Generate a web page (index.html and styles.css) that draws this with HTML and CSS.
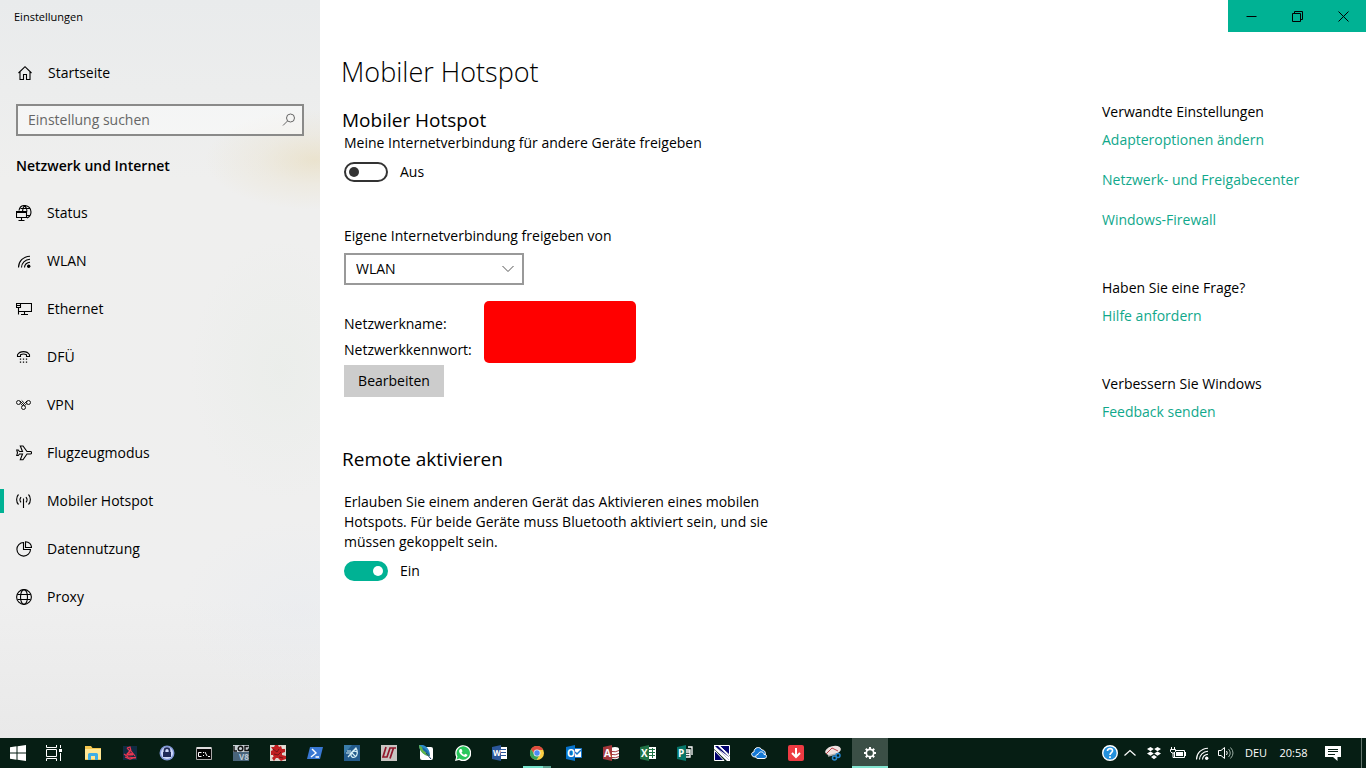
FILE: index.html
```html
<!DOCTYPE html>
<html lang="de">
<head>
<meta charset="utf-8">
<meta name="viewport" content="width=device-width, initial-scale=1">
<title>Einstellungen</title>
<link rel="stylesheet" href="styles.css">
</head>
<body>
<div class="window">
  <aside class="sidebar">
    <div class="window-title">Einstellungen</div>
    <a class="home" href="#">
      <svg class="icon" viewBox="0 0 16 16"><path d="M1.500 8 8 1.700 14.500 8M3 6.800V14.500h3.500V9.500h3v5H13V6.800"/></svg>
      Startseite
    </a>
    <div class="search">
      <input class="search-input" type="text" placeholder="Einstellung suchen" aria-label="Einstellung suchen">
      <svg class="search-icon" viewBox="0 0 14 14"><circle cx="8.500" cy="5" r="4"/><path d="M5.500 8 1 12.500"/></svg>
    </div>
    <h2 class="sidebar-heading">Netzwerk und Internet</h2>
    <nav class="nav">
      <a class="nav-item" href="#"><svg class="icon" viewBox="0 0 16 16"><path d="M3 5.500C3.500 2.500 5.500.5 8.500.5c4 0 6.500 3 6.500 6.500 0 3-1.500 5-4 6M4.500 3.500h9M6.500 6.500c0-2.500.7-4.500 2-6M8.500.5c1.700 1.700 2.500 4 2.500 6M.5 7.500v5h10v-5zM.5 7.500v-1h10v1M11 10.500h3M5.500 12.500v3M2.500 15.500h6"/></svg>Status</a>
      <a class="nav-item" href="#"><svg class="icon" viewBox="0 0 16 16"><path d="M2.500 14.500C2.500 8.500 7 3.500 14 3.200M5.500 14.500c0-4.500 3.500-8 8.500-8.300M8.500 14.500c0-3 2.500-5.200 5.500-5.300"/><circle class="solid" cx="12.700" cy="13.300" r="1.700"/></svg>WLAN</a>
      <a class="nav-item" href="#"><svg class="icon" viewBox="0 0 16 16"><path d="M4.500 2.500h11v8h-13v-4M.5 2.500h4v4h-4zM.5 4.500h4M8.500 10.500v3M2.500 10v3.500M5 13.500h7"/></svg>Ethernet</a>
      <a class="nav-item" href="#"><svg class="icon" viewBox="0 0 16 16"><path d="M1.500 7.500V5.800C4 1.600 11 1.600 13.500 5.800v1.700h-3V5.700C9 5 6 5 4.500 5.700v1.800z"/><path class="dots" d="M4.500 9.500v6M7.500 9.500v6M10.500 9.500v6"/></svg>DFÜ</a>
      <a class="nav-item" href="#"><svg class="icon thin" viewBox="0 0 16 16"><circle cx="2.500" cy="5.500" r="2"/><circle cx="12.500" cy="5.500" r="2"/><circle cx="7.500" cy="10.500" r="2"/><path d="M4 4 8.500 8.500M4.500 6.500 6.500 8.700M11 4 6.500 8.500M5.700 3.500 8 5.800M10.500 6.500 9 8.500"/></svg>VPN</a>
      <a class="nav-item" href="#"><svg class="icon" viewBox="0 0 16 16"><path d="M6.500 6.500 4.300 1H7l4 5.500h3.500c1.400 0 1.400 2.500 0 2.500H11l-4 5.800H4.300l2.200-5.800h-3L2.300 10.500H.7L1.500 7.800.7 5h1.600l1.200 1.500z"/></svg>Flugzeugmodus</a>
      <a class="nav-item active" href="#" aria-current="page"><svg class="icon" viewBox="0 0 16 16"><path d="M7.500 5.500v9.500M5 4c-1.200 1.500-1.200 3.800 0 5.300M10 4c1.200 1.500 1.200 3.800 0 5.300M2.500 1.500C0 4 0 9 2.500 11.500M12.500 1.500c2.500 2.500 2.500 7.500 0 10"/></svg>Mobiler Hotspot</a>
      <a class="nav-item" href="#"><svg class="icon" viewBox="0 0 16 16"><path d="M7.500 1.500A6.800 6.800 0 1 0 14.500 8.500H7.500zM9.500.7v5.800h6C15.500 3.200 13 .7 9.500.7z"/></svg>Datennutzung</a>
      <a class="nav-item" href="#"><svg class="icon" viewBox="0 0 16 16"><circle cx="8" cy="8" r="7.400"/><ellipse cx="8" cy="8" rx="3.500" ry="7.400"/><path d="M1.500 5.500h13M1.500 10.500h13"/></svg>Proxy</a>
    </nav>
  </aside>
  <main class="main">
    <div class="caption">
      <button class="caption-button" aria-label="Minimieren"><svg viewBox="0 0 11 11"><path d="M.5 5.500h10"/></svg></button>
      <button class="caption-button" aria-label="Verkleinern"><svg viewBox="0 0 11 11"><path d="M.5 2.500h8v8h-8zM2.500 2.500v-2h8v8h-2"/></svg></button>
      <button class="caption-button" aria-label="Schließen"><svg viewBox="0 0 11 11"><path d="m.5.5 10 10m0-10-10 10"/></svg></button>
    </div>
    <div class="page">
      <div class="content">
        <h1 class="page-title">Mobiler Hotspot</h1>
        <section class="hotspot">
          <h2 class="section-title">Mobiler Hotspot</h2>
          <p class="text" id="share">Meine Internetverbindung für andere Geräte freigeben</p>
          <label class="toggle"><input class="switch" type="checkbox" role="switch" aria-describedby="share">Aus</label>
        </section>
        <section class="source">
          <label class="text" for="connection">Eigene Internetverbindung freigeben von</label>
          <div class="select">
            <select class="select-box" id="connection"><option>WLAN</option></select>
            <svg class="select-arrow" viewBox="0 0 14 8"><path d="m1.500 1 5.500 5.500L12.500 1"/></svg>
          </div>
        </section>
        <section class="network">
          <div class="network-labels"><span>Netzwerkname:</span><span>Netzwerkkennwort:</span></div>
          <div class="redacted"></div>
        </section>
        <button class="edit">Bearbeiten</button>
        <section class="remote">
          <h2 class="section-title">Remote aktivieren</h2>
          <p class="text remote-text" id="remote">Erlauben Sie einem anderen Gerät das Aktivieren eines mobilen Hotspots. Für beide Geräte muss Bluetooth aktiviert sein, und sie müssen gekoppelt sein.</p>
          <label class="toggle"><input class="switch" type="checkbox" role="switch" checked aria-describedby="remote">Ein</label>
        </section>
      </div>
      <aside class="related">
        <section class="related-group"><h3 class="related-title">Verwandte Einstellungen</h3>
          <div class="links"><a href="#">Adapteroptionen ändern</a><a href="#">Netzwerk- und Freigabecenter</a><a href="#">Windows-Firewall</a></div></section>
        <section class="related-group"><h3 class="related-title">Haben Sie eine Frage?</h3>
          <div class="links"><a href="#">Hilfe anfordern</a></div></section>
        <section class="related-group"><h3 class="related-title">Verbessern Sie Windows</h3>
          <div class="links"><a href="#">Feedback senden</a></div></section>
      </aside>
    </div>
  </main>
</div>
<footer class="taskbar">
  <div class="system">
    <button class="task" aria-label="Start"><svg viewBox="0 0 16 16"><path fill="#fff" d="M0 2.300 6.500 1.300v6.200H0zM7.500 1.200 16 0v7.500H7.500zM0 8.500h6.500v6.200L0 13.700zM7.500 8.500H16V16l-8.500-1.200z"/></svg></button>
    <button class="task" aria-label="Aktive Anwendungen"><svg viewBox="0 0 16 16"><path fill="none" stroke="#fff" d="M.5 0v2.500h10V0M.5 4.500h10v7H.5zM.5 16v-2.500h10V16M14.500 0v3M14.500 8v8"/><path fill="#fff" d="M13 4h3v3h-3z"/></svg></button>
  </div>
  <div class="apps">
    <button class="task" aria-label="Explorer"><svg viewBox="0 0 16 16"><path fill="#f4c64f" d="M0 1h6l1.500 2H16v12H0z"/><path fill="#ffe794" d="M0 4h16v10H0z"/><path fill="#3eaee5" d="M3 15V9.500Q3 8 4.500 8h7Q13 8 13 9.500V15h-3v-4H6v4z"/></svg></button>
    <button class="task" aria-label="Funkprogramm"><svg viewBox="0 0 16 16"><path fill="#112b42" d="M1 1h14v14H1z"/><path fill="none" stroke="#ef3650" stroke-width="1.200" d="m5 3 3-1 1 4 4 5M5 3l3 3-3 3 6 1M2 9l4 3 8 1M3 12l5 2 6-2M6 7l4 2-5 1"/></svg></button>
    <button class="task" aria-label="Passwörter"><svg viewBox="0 0 16 16"><circle cx="8" cy="8" r="7.500" fill="#8298d6"/><circle cx="8" cy="8" r="6" fill="#d0dafa"/><path fill="none" stroke="#202a58" stroke-width="1.700" d="M5.500 8V5.500C5.500 2.300 10.500 2.300 10.500 5.500V8"/><path fill="#202a58" d="M4 7h8v5H4z"/></svg></button>
    <button class="task" aria-label="Eingabeaufforderung"><svg viewBox="0 0 16 16"><path fill="#050505" stroke="#aaa" d="M.5 2.500h15v12H.5z"/><path fill="#ddd" d="M1 2h14v2H1z"/><path fill="none" stroke="#fff" d="M5.500 7.500h-3v4h3M7.500 7v1M7.500 10v1M9 7l2 4M12 11.500h2"/></svg></button>
    <button class="task" aria-label="LOGO! V8"><svg viewBox="0 0 16 16"><path fill="#c7cfd5" d="M0 0h16v7H0z"/><path fill="#49647a" d="M0 7h16v9H0z"/><path fill="none" stroke="#111" stroke-width="1.400" d="M1 1v5h3M15.500 1.500H12v4h3.500v-2"/><ellipse cx="7.500" cy="3.500" rx="2.300" ry="2.200" fill="none" stroke="#111" stroke-width="1.400"/><text class="glyph" x="6" y="15" font-size="8" fill="#bdcbd7">V8</text></svg></button>
    <button class="task" aria-label="Zahnräder"><svg viewBox="0 0 16 16"><path fill="#ddd6cf" d="M0 0h16v16H0z"/><path fill="#c01d20" d="M1 2h3l1-2h3l1 2 2-1 1 3h3v3l-3 1v2l4 1v3l-3 1-2 1-3-3H6l-2 3-2-3 2-2-3-1V6l2-1z"/><path fill="none" stroke="#721316" d="m3 4 4 3 2-3M4 9l4 1 3-3M9 12l4 1"/><path fill="#eadfd8" d="M12 1h3v2h-3zM1 10h2v2H1z"/></svg></button>
    <button class="task" aria-label="PowerShell"><svg viewBox="0 0 16 16"><path fill="#3978d3" d="M3 2h13l-3 12H0z"/><path fill="none" stroke="#fff" stroke-width="1.400" d="m5 4 4 4-5 4M8.500 12H12"/></svg></button>
    <button class="task" aria-label="Fischer"><svg viewBox="0 0 16 16"><path fill="#235b8b" d="M0 0h16v16H0z"/><path fill="#3a7daa" d="M0 0h8L0 9z"/><path fill="none" stroke="#d5eff5" stroke-width="1.200" d="M3 6h4M2 8h5l5-5M4 12l8-9c2 3 2 7-1 9-2 1-4 0-4-2 0-3 3-5 6-3M8 8l3 3"/></svg></button>
    <button class="task" aria-label="LTspice"><svg viewBox="0 0 16 16"><path fill="#c9c4c2" d="M0 0h16v16H0z"/><path fill="none" stroke="#92172b" stroke-width="1.700" d="M5 2 2 12h4L9 3h6M12.500 3 9 13.500"/></svg></button>
    <button class="task" aria-label="Stift"><svg viewBox="0 0 16 16"><rect x="2" y="2" width="13" height="13" rx="2" fill="#fff"/><path fill="#2d8ac8" d="M1 0h4c5 2 7 6 7 11C6 11 1 6 1 0z"/><path fill="#62b548" d="M1 0c3 2 8 6 11 11C6 11 1 6 1 0z"/><path fill="#1767a8" d="M4 2c4 2 7 5 8 9L5 5z"/><path stroke="#163c67" d="m8 8 5 6"/></svg></button>
    <button class="task" aria-label="WhatsApp"><svg viewBox="0 0 16 16"><path fill="#fff" d="M0 16 1.200 12A8 8 0 1 1 4 15z"/><path fill="#29c65c" d="m1.500 14.500 1-3A6.700 6.700 0 1 1 4.500 13.600z"/><path fill="#fff" d="M5 4h1.500l1 2.200-1 1.200c.8 1.300 1.500 1.900 2.700 2.300l1.200-1 2 1c0 1.500-1.300 2.500-3 2.100C6.500 11 4 8 4 5.800z"/></svg></button>
    <button class="task" aria-label="Word"><svg viewBox="0 0 16 16"><path fill="#fff" d="M8 2h7v12H8z"/><path stroke="#2b579a" d="M9 4.500h5M9 7.500h5M9 10.500h5"/><path fill="#2b579a" d="m0 2 9-2v16l-9-2z"/><text class="glyph" x="1" y="11" font-size="8" fill="#fff">W</text></svg></button>
    <button class="task open" aria-label="Chrome"><svg viewBox="0 0 16 16"><circle cx="8" cy="8" r="7" fill="#fbcf42"/><path fill="#df4b3f" d="M2 4.300A7 7 0 0 1 14.200 5H8L5 9z"/><path fill="#35a35b" d="M2 4.300A7 7 0 0 0 7.500 15l3-5-5-.3z"/><circle cx="8" cy="8" r="3.500" fill="#eee"/><circle cx="8" cy="8" r="2.700" fill="#4c8bf5"/></svg></button>
    <button class="task" aria-label="Outlook"><svg viewBox="0 0 16 16"><path fill="#fff" stroke="#1677cd" d="M8 3.500h7.500v9H8z"/><path fill="none" stroke="#1677cd" stroke-width="1.500" d="m9 7 2 2 4-4"/><path fill="#0873ca" d="m0 2 9-2v16l-9-2z"/><text class="glyph" x="1" y="12" font-size="10" fill="#fff">O</text></svg></button>
    <button class="task" aria-label="Access"><svg viewBox="0 0 16 16"><ellipse cx="12" cy="4" rx="4" ry="2" fill="#fff"/><path fill="#fff" d="M8 4h8v8c0 3-8 3-8 0z"/><path fill="none" stroke="#a4373a" d="M9 6.500q3 1 7-1M9 9.500q3 1 7-1M9 12.500q3 1 7-1"/><path fill="#a4373a" d="m0 2 9-2v16l-9-2z"/><text class="glyph" x="1" y="12" font-size="10" fill="#fff">A</text></svg></button>
    <button class="task" aria-label="Excel"><svg viewBox="0 0 16 16"><path fill="#fff" d="M8 2h8v12H8z"/><path fill="none" stroke="#217346" d="M9 4.500h6M9 7.500h6M9 10.500h6M12.500 3v10"/><path fill="#217346" d="m0 2 9-2v16l-9-2z"/><text class="glyph" x="1" y="12" font-size="10" fill="#fff">X</text></svg></button>
    <button class="task" aria-label="Publisher"><svg viewBox="0 0 16 16"><path fill="none" stroke="#fff" stroke-width="1.300" d="M9 5h4v7H9M11 2h4v8M9 7h4M9 9.500h4"/><path fill="#077568" d="m0 2 9-2v16l-9-2z"/><text class="glyph" x="1" y="12" font-size="10" fill="#fff">P</text></svg></button>
    <button class="task" aria-label="NI"><svg viewBox="0 0 16 16"><path fill="#02026e" stroke="#fff" d="M5 .5h10.500V10zM.5 5.500v10H10z"/><path fill="#fff" d="M0 0h5l11 11v5h-3L0 4z"/><path fill="#02026e" d="M1 1h3l11 11v3z"/><path fill="#fff" d="m3 3 12 9v3z"/></svg></button>
    <button class="task" aria-label="OneDrive"><svg viewBox="0 0 16 16"><path fill="#1478d4" stroke="#fff" d="M4 12C0 12-.5 7 3 7c0-5 6-6 8-2 3 0 4 3 3 6z"/><path fill="#1478d4" stroke="#fff" d="M7 13.500C4 13.500 4 9.500 7 9.500c1-4 6-3 6 0 4 0 3 4 0 4z"/></svg></button>
    <button class="task" aria-label="Download"><svg viewBox="0 0 16 16"><rect width="16" height="16" rx="2" fill="#ee3b43"/><path fill="none" stroke="#fff" stroke-width="2" d="M8 3v9M4 8l4 4 4-4"/></svg></button>
    <button class="task" aria-label="Snipping Tool"><svg viewBox="0 0 16 16"><ellipse cx="8" cy="5.500" rx="8" ry="4.500" fill="#eee1e0" transform="rotate(-15 8 5.500)"/><path fill="none" stroke="#bb4048" d="m1 9 6-6M7 3l6 3"/><path fill="none" stroke="#aaa" stroke-width="1.500" d="m3 11 8-2"/><circle cx="9.500" cy="13" r="2" fill="none" stroke="#2685ce" stroke-width="1.500"/><circle cx="13" cy="10.500" r="2" fill="none" stroke="#2685ce" stroke-width="1.500"/></svg></button>
    <button class="task current" aria-label="Einstellungen"><svg viewBox="0 0 16 16"><circle cx="8" cy="8" r="3.700" fill="none" stroke="#fff" stroke-width="1.700"/><path stroke="#fff" stroke-width="2" d="M8 2v2.500M8 11.500V14M2 8h2.500M11.500 8H14M3.800 3.800l1.700 1.700M10.500 10.500l1.700 1.700M12.200 3.800l-1.700 1.700M5.500 10.500l-1.700 1.700"/></svg></button>
  </div>
  <div class="tray">
    <button class="tray-button" aria-label="Hilfe"><svg viewBox="0 0 16 16"><circle cx="8" cy="8" r="7.300" fill="#2390dc" stroke="#fff" stroke-width="1.400"/><path fill="none" stroke="#fff" stroke-width="1.700" d="M5.500 6C5.500 2.500 11 3 10.500 6 10.300 7.500 8 7.800 8 10M8 11.200v1.800"/></svg></button>
    <button class="tray-button narrow" aria-label="Ausgeblendete Symbole"><svg viewBox="0 0 16 16"><path fill="none" stroke="#fff" stroke-width="1.200" d="m2.500 10.500 5.500-5 5.500 5"/></svg></button>
    <button class="tray-button" aria-label="Dropbox"><svg viewBox="0 0 16 16"><path fill="#fff" d="m4.500 2 3.300 2-3.300 2.200L1 4zM11.500 2 15 4l-3.500 2.200L8.200 4zM4.500 6.500l3.300 2-3.300 2.200L1 8.500zM11.500 6.500l3.500 2-3.500 2.200-3.300-2.200zM8 10l3 2-3 2.200L5 12z"/></svg></button>
    <button class="tray-button" aria-label="Akku"><svg viewBox="0 0 16 16"><path fill="none" stroke="#fff" d="M6 5.500h8.500v7h-10V8M15.500 7v4M1.500 2v3M4.500 2v3M.5 4.500h5v2L4 8H2L.5 6.500zM3 8v4.500h2"/><path fill="#fff" d="M6 7h7v4H6z"/></svg></button>
    <button class="tray-button" aria-label="WLAN"><svg viewBox="0 0 16 16"><path fill="none" stroke="#fff" stroke-width="1.100" d="M2.500 14.500C2.500 8.500 7 3.500 14 3.200M5.500 14.500c0-4.500 3.500-8 8.500-8.300M8.500 14.500c0-3 2.500-5.200 5.500-5.300"/><circle cx="12.700" cy="13.300" r="1.700" fill="#fff"/></svg></button>
    <button class="tray-button" aria-label="Lautstärke"><svg viewBox="0 0 16 16"><path fill="none" stroke="#fff" d="M.5 5.500H3l3.500-3v11L3 10.500H.5zM8.500 6q1.500 2 0 4"/><path fill="none" stroke="#9aaca3" d="M10.500 4q3.500 4 0 8M12.500 2.500q5 5.500 0 11"/></svg></button>
    <button class="tray-text">DEU</button>
    <button class="tray-text clock">20:58</button>
    <button class="tray-button action" aria-label="Info-Center"><svg viewBox="0 0 16 16"><path fill="#fff" d="M0 1h16v11h-3.500v4L8 12H0z"/><path stroke="#061e14" d="M3 4.500h10M3 6.500h10M3 9.500h7"/></svg></button>
    <button class="show-desktop" aria-label="Desktop anzeigen"></button>
  </div>
</footer>
</body>
</html>
```
FILE: styles.css
```css
* { box-sizing: border-box; }

body {
  margin: 0;
  min-height: 100vh;
  display: flex;
  flex-direction: column;
  background: #fff;
  color: #000;
  font: 14px/20px "Open Sans", "Noto Sans", sans-serif;
}

h1, h2, h3, p { margin: 0; font-weight: 400; }
button, input, select { font: inherit; color: inherit; margin: 0; border-radius: 0; }
button { border: 0; padding: 0; background: none; }
a { color: inherit; text-decoration: none; }
svg { display: block; flex: none; }

.window { flex: 1; display: flex; }

.sidebar {
  flex: 0 0 320px;
  background:
    radial-gradient(ellipse 110px 50px at 315px 160px, rgba(230, 215, 175, .5), rgba(232, 220, 190, .25) 50%, transparent),
    radial-gradient(ellipse 90px 130px at 280px 370px, rgba(226, 234, 226, .3), transparent),
    radial-gradient(ellipse 120px 90px at 300px 610px, rgba(230, 234, 240, .4), transparent),
    linear-gradient(#e9ebec, #efefee 180px, #efefef 600px, #e9e9e9);
}

.window-title { padding: 7px 14px 5px; font-size: 11px; }

.icon { width: 16px; height: 16px; fill: none; stroke: #000; stroke-width: 1.1; }
.icon.thin { stroke-width: .9; }
.icon .solid { fill: #000; stroke: none; }
.icon .dots { stroke-dasharray: 1.2 1.8; stroke-width: 1.3; }

.home { display: flex; align-items: center; gap: 15px; height: 42px; margin-top: 20px; padding: 0 17px; }

.search { position: relative; margin: 10px 16px 0; }
.search-input {
  display: block;
  width: 100%;
  height: 32px;
  padding: 0 34px 2px 10px;
  border: 2px solid #8a8a89;
  background: rgba(255, 255, 255, .45);
}
.search-input::placeholder { color: #666; opacity: 1; }
.search-icon { position: absolute; right: 8px; top: 9px; width: 14px; height: 14px; fill: none; stroke: #666; }

.sidebar-heading { margin: 18px 16px 11px; font-size: 14px; line-height: 24px; font-weight: 600; }

.nav-item { display: flex; align-items: center; gap: 15px; height: 48px; padding: 0 16px; }
.nav-item.active { background: linear-gradient(#00b294, #00b294) left center / 4px 24px no-repeat; }

.main { flex: 1; min-width: 0; }

.caption { display: flex; width: 138px; height: 32px; margin-left: auto; background: #00b294; }
.caption-button { flex: 1; display: grid; place-items: center; }
.caption-button svg { width: 11px; height: 11px; fill: none; stroke: #000; }

.page { display: flex; justify-content: space-between; padding-left: 24px; }
.content { flex: 0 1 440px; padding-top: 20px; }
.page-title { margin-left: -3px; font-size: 27px; line-height: 40px; font-weight: 300; }
.section-title { margin-left: -2px; font-size: 19px; line-height: 26px; }

.hotspot { margin-top: 15px; }
.toggle { display: flex; align-items: center; gap: 12px; margin-top: 9px; }
.switch {
  appearance: none;
  display: flex;
  align-items: center;
  width: 44px;
  height: 20px;
  padding: 0 3px;
  border: 2px solid #333;
  border-radius: 10px;
}
.switch::before { content: ""; width: 10px; height: 10px; border-radius: 50%; background: #333; }
.switch:checked { justify-content: flex-end; border-color: #00b294; background: #00b294; }
.switch:checked::before { background: #fff; }

.source { margin-top: 44px; }
.source .text { display: block; }
.select { position: relative; width: 180px; margin-top: 7px; }
.select-box {
  appearance: none;
  display: block;
  width: 100%;
  height: 32px;
  padding: 0 30px 0 10px;
  border: 2px solid #999;
  background: #fff;
}
.select-arrow { position: absolute; right: 9px; top: 12px; width: 14px; height: 8px; fill: none; stroke: #555; pointer-events: none; }

.network { display: grid; grid-template-columns: 140px 152px; align-items: end; margin-top: 16px; }
.network-labels { display: grid; line-height: 26px; }
.redacted { height: 62px; border-radius: 5px; background: #f00; }
.edit { width: 100px; height: 32px; margin-top: 2px; background: #ccc; }

.remote { margin-top: 49px; }
.remote-text { margin-top: 20px; }

.related { flex: 0 0 264px; display: grid; align-content: start; gap: 48px; padding-top: 70px; }
.links { display: grid; justify-items: start; gap: 20px; margin-top: 8px; color: #10a88b; }
.related-title { font-size: 14px; }

.taskbar { display: flex; height: 30px; background: #061e14; color: #fff; }
.system { display: flex; }
.apps { display: flex; gap: 1px; padding-left: 3px; }
.task { width: 36px; display: grid; place-items: center; }
.task svg { width: 16px; height: 16px; }
.task.open { background: linear-gradient(90deg, #76e3cb 72%, #5aa08e 72%) bottom / 28px 2px no-repeat; }
.task.current { background: #3b4f46; border-bottom: 2px solid #83e5d0; padding-top: 2px; }
.glyph { font-family: "Open Sans", sans-serif; font-weight: 700; }

.tray { display: flex; margin-left: auto; }
.tray-button { width: 24px; display: grid; place-items: center; }
.tray-button svg { width: 16px; height: 16px; }
.tray-button.narrow { width: 16px; margin-right: 4px; }
.tray-text { width: 36px; font-size: 11px; }
.tray-text.clock { width: 39px; }
.tray-button.action { width: 40px; margin-right: 8px; }
.show-desktop { width: 5px; border-left: 1px solid #64756d; }
```
